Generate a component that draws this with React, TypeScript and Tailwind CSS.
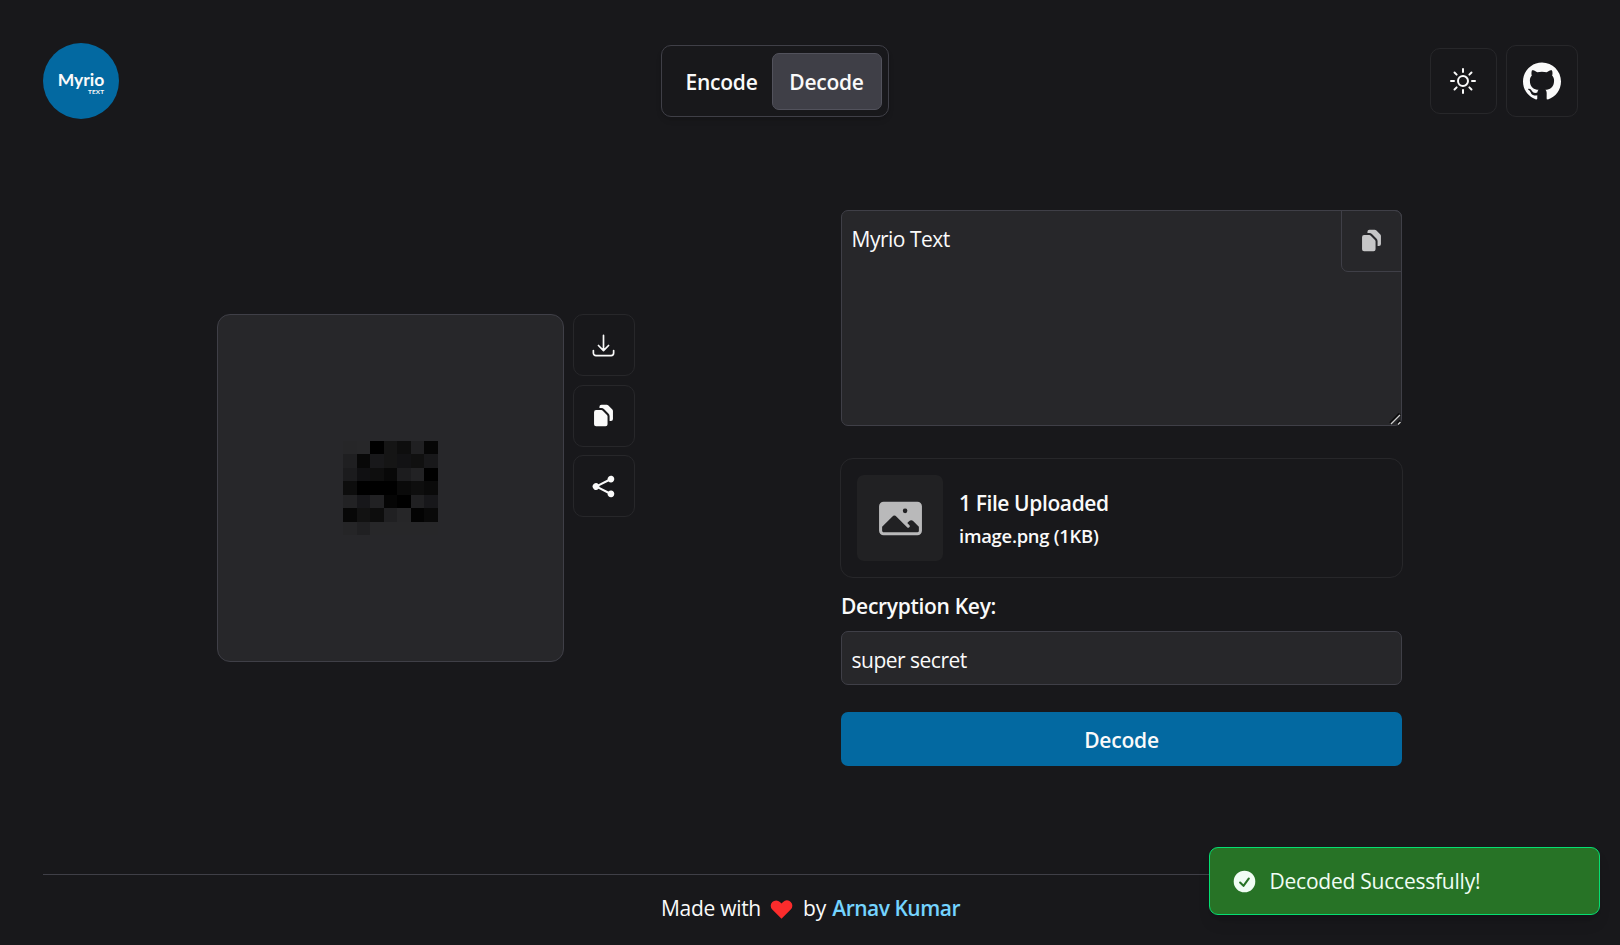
import type { ReactNode } from "react";
import { SiGithub } from "react-icons/si";
import { HiHeart } from "react-icons/hi";
import {
  HiMiniCheckCircle,
  HiMiniDocumentDuplicate,
  HiMiniShare,
  HiOutlineArrowDownTray,
  HiOutlineSun,
  HiPhoto,
} from "react-icons/hi2";

const pixels = [
  ["#262628", "#272729", "#000000", "#151515", "#0e0e0e", "#202022", "#060606"],
  ["#1f1f21", "#080808", "#18181a", "#151515", "#121214", "#101010", "#18181a"],
  ["#1b1b1d", "#101012", "#0e0e0e", "#080808", "#1c1c1e", "#222224", "#000000"],
  ["#0d0d0d", "#000000", "#000000", "#000000", "#0a0a0a", "#0e0e0e", "#0a0a0a"],
  ["#222224", "#17171a", "#212123", "#050505", "#000000", "#202022", "#17171a"],
  ["#070707", "#121212", "#0d0d0d", "#202022", "#262628", "#030303", "#090909"],
  ["#252527", "#202022", "#272729", "#272729", "#272729", "#272729", "#272729"],
];

function ActionButton({ label, children }: { label: string; children: ReactNode }) {
  return (
    <button
      aria-label={label}
      className="flex h-[62px] w-[62px] items-center justify-center rounded-[10px] border border-zinc-800 pr-px"
    >
      {children}
    </button>
  );
}

function Header() {
  return (
    <header className="flex h-[76px] items-center justify-between">
      <div className="flex h-[76px] w-[76px] flex-col items-center justify-center rounded-full bg-[#0369a1] font-['Lato'] font-bold">
        <div className="flex flex-col items-end pt-[3px]">
          <span className="text-[17.5px] leading-[17px]">Myrio</span>
          <span className="text-[6.4px] leading-[7px] tracking-[0.2px]">TEXT</span>
        </div>
      </div>

      <nav className="flex h-[72px] w-[228px] items-center rounded-[10px] border border-zinc-700 pl-[7px] pr-[6px] font-semibold tracking-[-0.25px] shadow-md">
        <button className="flex h-[57px] w-[103px] items-center pl-[17px] pt-[2px]">Encode</button>
        <button className="flex h-[57px] flex-1 items-center justify-center rounded-[7px] border border-zinc-600 bg-zinc-700 pt-[2px]">
          Decode
        </button>
      </nav>

      <div className="flex items-center gap-[9px]">
        <button
          aria-label="Theme"
          className="flex h-[66px] w-[67px] items-center justify-center rounded-[10px] border border-zinc-800 pr-px"
        >
          <HiOutlineSun size={32} />
        </button>
        <a
          aria-label="GitHub"
          className="flex h-[72px] w-[72px] items-center justify-center rounded-[10px] border border-zinc-800"
        >
          <SiGithub size={38} />
        </a>
      </div>
    </header>
  );
}

function Preview() {
  return (
    <section className="flex gap-[9px]">
      <div className="flex h-[348px] w-[347px] items-center justify-center rounded-[13px] border border-zinc-700 bg-zinc-800">
        <div className="grid h-[95px] w-[95px] grid-cols-7 grid-rows-7">
          {pixels.flat().map((color, i) => (
            <div key={i} style={{ backgroundColor: color }} />
          ))}
        </div>
      </div>
      <div className="flex flex-col gap-[8.5px]">
        <ActionButton label="Download">
          <HiOutlineArrowDownTray size={27} />
        </ActionButton>
        <ActionButton label="Copy">
          <HiMiniDocumentDuplicate size={27} />
        </ActionButton>
        <ActionButton label="Share">
          <HiMiniShare size={27} />
        </ActionButton>
      </div>
    </section>
  );
}

function DecodeForm() {
  return (
    <section className="flex w-[561px] flex-col">
      <div className="relative h-[216px]">
        <textarea
          defaultValue="Myrio Text"
          className="block h-full w-full resize-none rounded-[7px] border border-zinc-700 bg-zinc-800 px-[9.5px] pt-[12px] leading-[32px] tracking-[-0.5px] outline-none"
        />
        <button
          aria-label="Copy text"
          className="absolute right-0 top-0 flex h-[62px] w-[61px] items-center justify-center rounded-bl-[7px] rounded-tr-[7px] border border-zinc-700 pb-px text-[#c6c6c7]"
        >
          <HiMiniDocumentDuplicate size={27} />
        </button>
        <svg viewBox="0 0 12 12" className="pointer-events-none absolute bottom-px right-px h-3 w-3">
          <path d="M1.5 10.5 11 1M8.5 11 11.5 8" stroke="#0b0b0c" strokeWidth="3.4" />
          <path d="M2 11 11 2M9 11.5 11.5 9" stroke="#cfcfcf" strokeWidth="1.4" />
        </svg>
      </div>

      <div className="-mx-px mt-[32px] flex h-[120px] items-center gap-[16px] rounded-[13px] border border-zinc-800 px-[16px] font-semibold">
        <div className="flex h-[86px] w-[86px] items-center justify-center rounded-[7px] bg-[#212123] text-[#b9b9ba]">
          <HiPhoto size={49} />
        </div>
        <div className="flex flex-col pt-[2px]">
          <p className="leading-[34px] tracking-[-0.4px]">1 File Uploaded</p>
          <p className="text-[18.4px] leading-[32px] tracking-[-0.25px]">image.png (1KB)</p>
        </div>
      </div>

      <label className="mt-[12px] h-[41px] font-semibold leading-[32px] tracking-[-0.3px]">
        Decryption Key:
      </label>
      <input
        defaultValue="super secret"
        className="h-[54px] rounded-[7px] border border-zinc-700 bg-zinc-800 px-[9.5px] pt-[3px] tracking-[-0.5px] outline-none"
      />
      <button className="mt-[27px] flex h-[54px] items-center justify-center rounded-[7px] bg-[#0369a1] pt-[2px] font-semibold tracking-[-0.2px]">
        Decode
      </button>
    </section>
  );
}

function Toast() {
  return (
    <div className="absolute bottom-[30px] right-[20.5px] flex h-[68px] w-[390.5px] items-center gap-[11.5px] rounded-[9px] border border-green-400 bg-[#277326] pl-[21px] tracking-[-0.23px] text-green-50 shadow-lg">
      <HiMiniCheckCircle size={27} />
      <span>Decoded Successfully!</span>
    </div>
  );
}

export default function App() {
  return (
    <div className="relative flex h-[945px] w-full flex-col overflow-hidden bg-zinc-900 pl-[43px] pr-[42px] pt-[43px] font-['Open_Sans',sans-serif] text-[21px] leading-[32px] text-zinc-50">
      <Header />
      <main className="mt-[91px] flex items-center gap-[206px] pl-[174px]">
        <Preview />
        <DecodeForm />
      </main>
      <footer className="mt-[108px] flex h-[70px] items-center justify-center border-t border-zinc-700 pb-[3px]">
        <span className="tracking-[-0.3px]">Made with</span>
        <HiHeart size={27} className="ml-[7px] text-[#fb2c2c]" />
        <span className="ml-[8px]">by</span>
        <a className="ml-[6px] font-semibold tracking-[-0.5px] text-sky-300">Arnav Kumar</a>
      </footer>
      <Toast />
    </div>
  );
}
